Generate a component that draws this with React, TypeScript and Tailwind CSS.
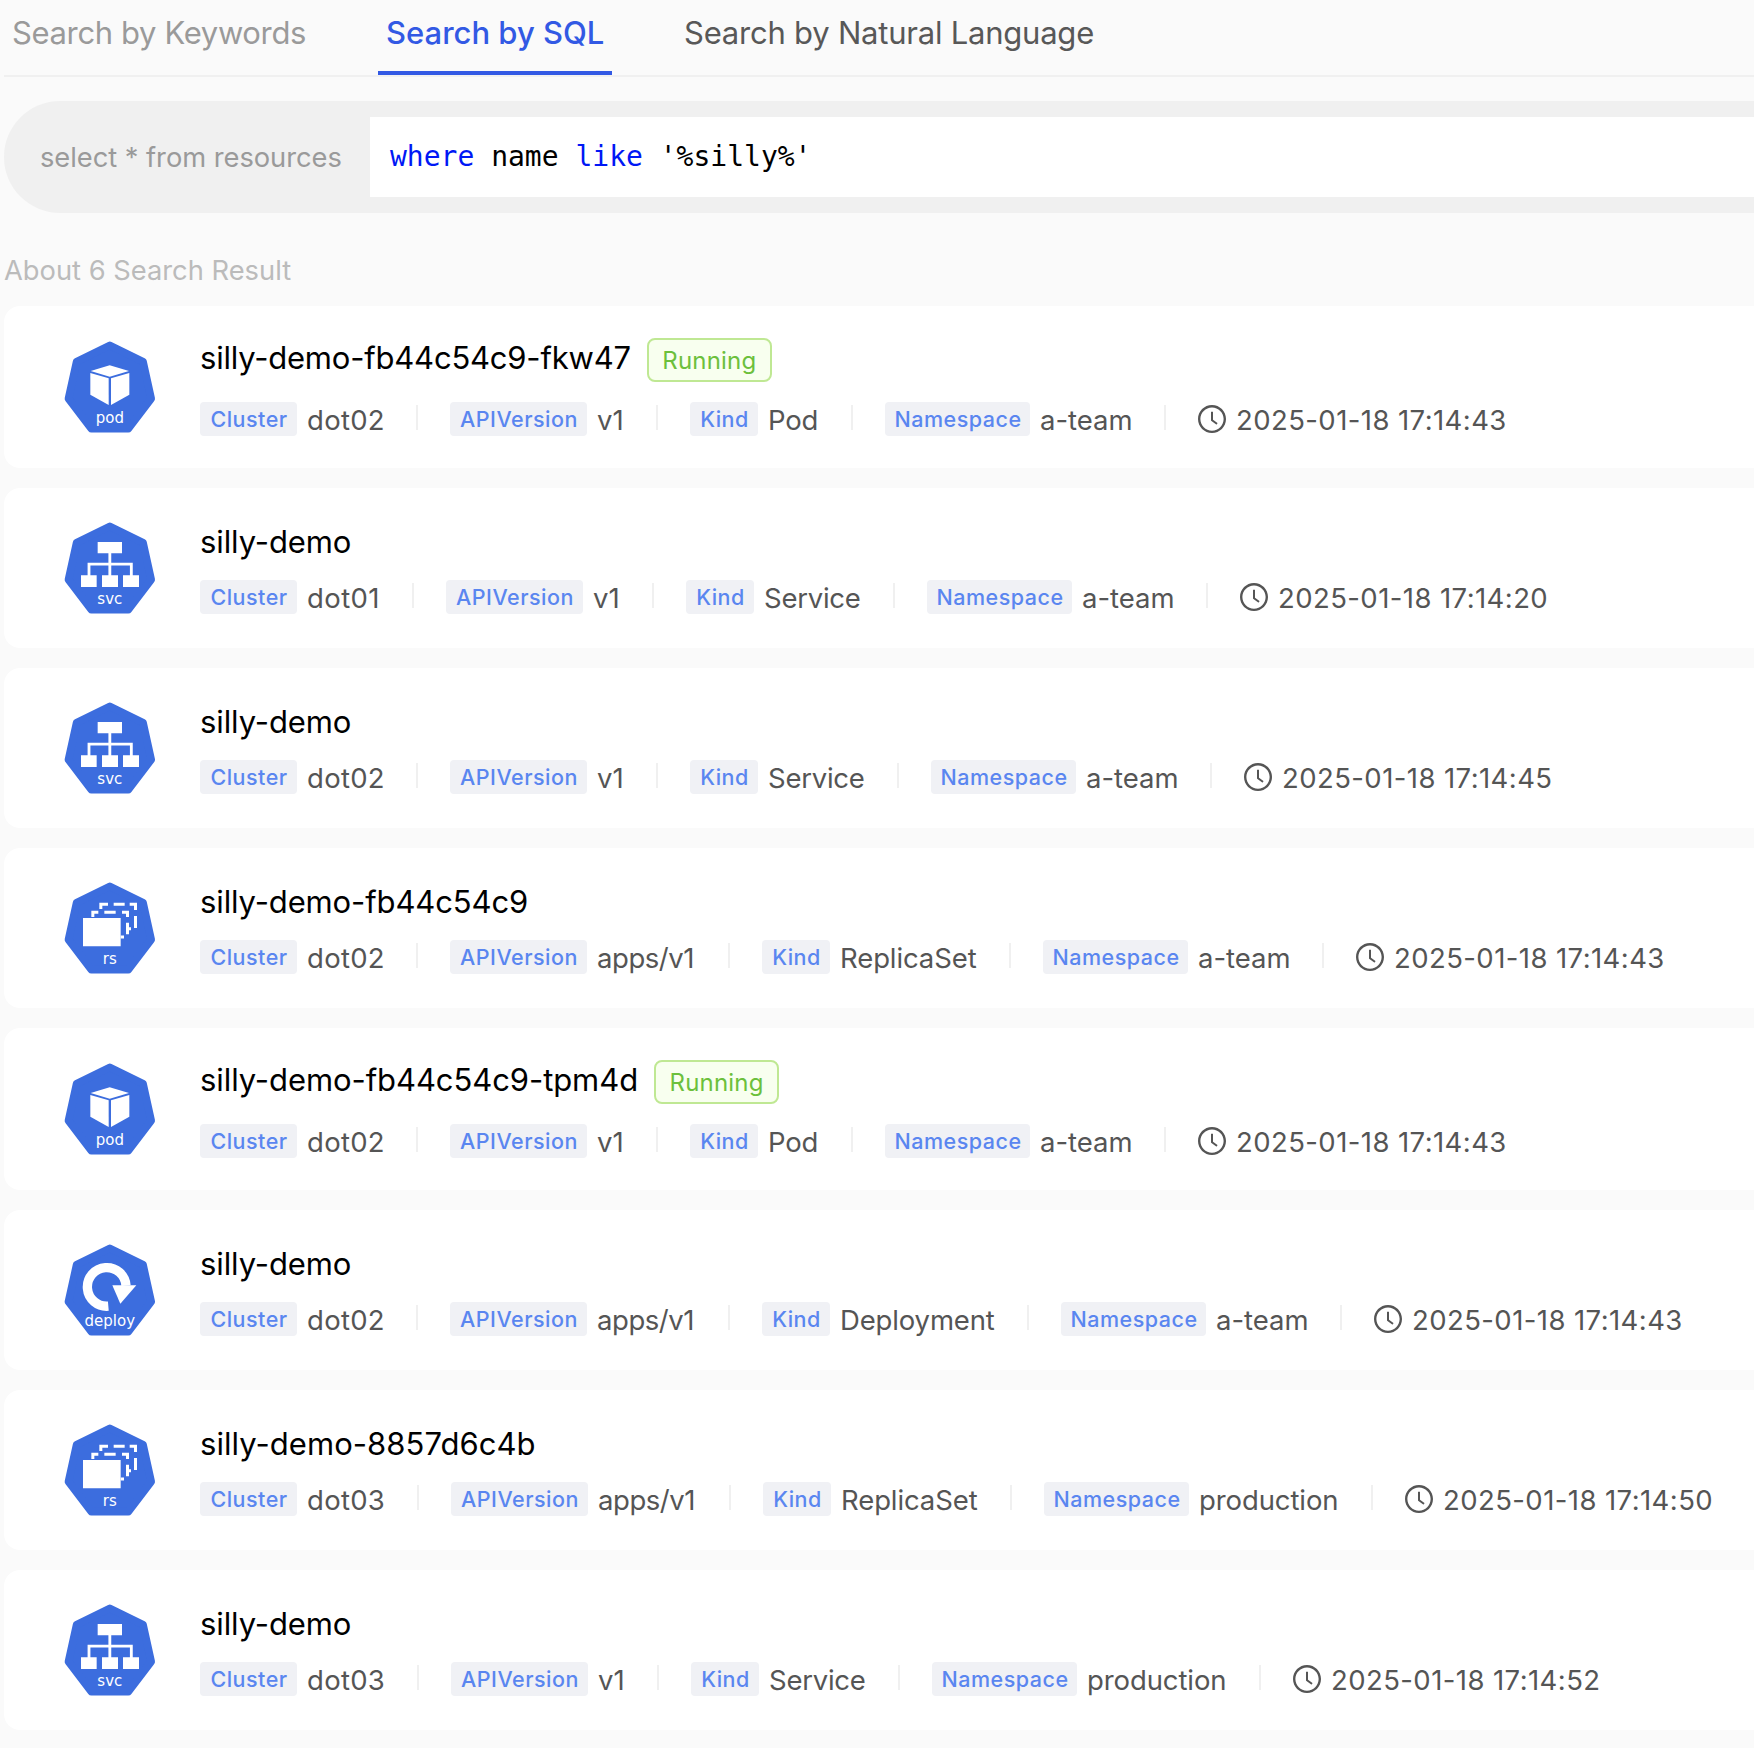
import type { ReactNode } from "react";

type IconKind = "pod" | "svc" | "rs" | "deploy";

const GLYPHS: Record<IconKind, ReactNode> = {
  pod: (
    <>
      <path d="M143 82 L201 99 L143 116 L86 99 Z" />
      <path d="M85 105 L140 121 V201 L85 170 Z" />
      <path d="M202 105 L147 121 V201 L202 170 Z" />
    </>
  ),
  svc: (
    <>
      <path d="M107 69h73v34h-73z M57 169h47v35H57z M120 169h48v35h-48z M183 169h48v35h-48z" />
      <path d="M143.500 100 V172 M81 172 V135.500 H208 V172" fill="none" stroke="#fff" strokeWidth="8.500" />
    </>
  ),
  rs: (
    <>
      <path d="M63 117h113v85H63z" />
      <path
        d="M92.500 114 V99.500 H109 M127 99.500 H161 M180 99.500 H196.500 V114 M196.500 131 V166 M200 149 H207 M176 174 H186 M116.500 90 V75.500 H138 M155 75.500 H188 M203 75.500 H220.500 V93 M220.500 111 V147"
        fill="none"
        stroke="#fff"
        strokeWidth="9"
      />
    </>
  ),
  deploy: (
    <>
      <path d="M139 195.500 A58 58 0 1 1 192 134" fill="none" stroke="#fff" strokeWidth="28" />
      <path d="M151 133 H223 L175 188 Z" />
    </>
  ),
};

function ResourceIcon({ kind }: { kind: IconKind }) {
  return (
    <svg className="ml-[58px] h-[98px] w-24 shrink-0" viewBox="0 0 288 294" fill="#fff">
      <path
        d="M143.500 22 L243 71 L267.500 182 L199 272 H88 L19.500 182 L44 71 Z"
        fill="#3c6dde"
        stroke="#3c6dde"
        strokeWidth="23"
        strokeLinejoin="round"
      />
      {GLYPHS[kind]}
      <text x="143.500" y="255.500" textAnchor="middle" fontFamily="DejaVu Sans" fontSize="45">
        {kind}
      </text>
    </svg>
  );
}

function ClockIcon() {
  return (
    <svg className="mt-[3px] size-7 shrink-0" viewBox="64 64 896 896" fill="currentColor">
      <path d="M512 64C264.600 64 64 264.600 64 512s200.600 448 448 448 448-200.600 448-448S759.400 64 512 64zm0 820c-205.400 0-372-166.600-372-372s166.600-372 372-372 372 166.600 372 372-166.600 372-372 372z" />
      <path d="M686.700 638.600L544.100 535.500V288c0-4.400-3.600-8-8-8H488c-4.400 0-8 3.600-8 8v275.400c0 2.600 1.200 5 3.300 6.500l165.400 120.600c3.600 2.600 8.600 1.800 11.200-1.700l28.600-39c2.600-3.700 1.800-8.700-1.800-11.200z" />
    </svg>
  );
}

const LABEL_WIDTH = {
  Cluster: "w-[97px]",
  APIVersion: "w-[137px]",
  Kind: "w-[68px]",
  Namespace: "w-[145px]",
};

const VALUE_STYLE: Record<string, string> = {
  dot01: "w-[73px] tracking-[0.4px]",
  dot02: "w-[77px] tracking-[0.3px]",
  dot03: "w-[78px] tracking-[0.3px]",
  v1: "w-[27px] tracking-normal",
  "apps/v1": "w-[99px] tracking-[-0.45px]",
  Pod: "w-[51px] tracking-[-0.2px]",
  Service: "w-[97px] tracking-[-0.25px]",
  ReplicaSet: "w-[137px] tracking-[-0.1px]",
  Deployment: "w-[155px] tracking-[-0.15px]",
  "a-team": "w-[92px] tracking-normal",
  production: "w-[140px] tracking-[-0.1px]",
};

function Field({ label, value }: { label: keyof typeof LABEL_WIDTH; value: string }) {
  return (
    <>
      <span
        className={`${LABEL_WIDTH[label]} flex h-[34px] shrink-0 items-center justify-center rounded bg-[#f0f1f5] pl-px text-[21.5px] font-medium tracking-[0.5px] text-[#5a86f0]`}
      >
        {label}
      </span>
      <span className={`${VALUE_STYLE[value]} ml-2.5 shrink-0 pt-px text-[27.5px] leading-[34px] whitespace-nowrap`}>
        {value}
      </span>
      <span className="mx-8 mt-[3px] h-[25px] w-0.5 shrink-0 bg-[#f0f0f0]" />
    </>
  );
}

interface Resource {
  icon: IconKind;
  name: string;
  nameTracking: string;
  running?: boolean;
  cluster: string;
  api: string;
  kind: string;
  namespace: string;
  time: string;
}

const RESOURCES: Resource[] = [
  { icon: "pod", name: "silly-demo-fb44c54c9-fkw47", nameTracking: "tracking-[-0.21px]", running: true, cluster: "dot02", api: "v1", kind: "Pod", namespace: "a-team", time: "2025-01-18 17:14:43" },
  { icon: "svc", name: "silly-demo", nameTracking: "tracking-[-0.1px]", cluster: "dot01", api: "v1", kind: "Service", namespace: "a-team", time: "2025-01-18 17:14:20" },
  { icon: "svc", name: "silly-demo", nameTracking: "tracking-[-0.1px]", cluster: "dot02", api: "v1", kind: "Service", namespace: "a-team", time: "2025-01-18 17:14:45" },
  { icon: "rs", name: "silly-demo-fb44c54c9", nameTracking: "tracking-[-0.12px]", cluster: "dot02", api: "apps/v1", kind: "ReplicaSet", namespace: "a-team", time: "2025-01-18 17:14:43" },
  { icon: "pod", name: "silly-demo-fb44c54c9-tpm4d", nameTracking: "tracking-[-0.08px]", running: true, cluster: "dot02", api: "v1", kind: "Pod", namespace: "a-team", time: "2025-01-18 17:14:43" },
  { icon: "deploy", name: "silly-demo", nameTracking: "tracking-[-0.1px]", cluster: "dot02", api: "apps/v1", kind: "Deployment", namespace: "a-team", time: "2025-01-18 17:14:43" },
  { icon: "rs", name: "silly-demo-8857d6c4b", nameTracking: "tracking-[0.05px]", cluster: "dot03", api: "apps/v1", kind: "ReplicaSet", namespace: "production", time: "2025-01-18 17:14:50" },
  { icon: "svc", name: "silly-demo", nameTracking: "tracking-[-0.1px]", cluster: "dot03", api: "v1", kind: "Service", namespace: "production", time: "2025-01-18 17:14:52" },
];

function ResourceCard({ item }: { item: Resource }) {
  return (
    <div className={`${item.running ? "h-[162px]" : "h-40"} flex items-center rounded-l-2xl bg-white`}>
      <ResourceIcon kind={item.icon} />
      <div className="ml-[42px] flex flex-col self-start pt-8">
        <div className={`${item.running ? "mb-5" : "mb-4"} flex h-11 items-center`}>
          <span
            className={`${item.running ? "mb-[5px]" : "mb-px"} ${item.nameTracking} text-[31px] leading-10 whitespace-nowrap text-black`}
          >
            {item.name}
          </span>
          {item.running && (
            <span className="ml-4 flex h-11 w-[125px] items-center justify-center rounded-lg border-2 border-[#bfe893] bg-[#f8ffef] pt-px text-[24px] tracking-[0.2px] text-[#6cc03c]">
              Running
            </span>
          )}
        </div>
        <div className="flex h-[34px] items-start text-[#555]">
          <Field label="Cluster" value={item.cluster} />
          <Field label="APIVersion" value={item.api} />
          <Field label="Kind" value={item.kind} />
          <Field label="Namespace" value={item.namespace} />
          <ClockIcon />
          <span className="ml-2.5 pt-px text-[27.5px] leading-[34px] tracking-[0.42px] whitespace-nowrap">{item.time}</span>
        </div>
      </div>
    </div>
  );
}

export default function App() {
  return (
    <div className="h-[1748px] w-full overflow-hidden bg-[#fafafa] pl-1 font-['Inter',sans-serif]">
      <div className="flex h-[77px] gap-16 border-b-2 border-[#f0f0f0] text-[31px] leading-[65px] whitespace-nowrap">
        <div className="w-[310px] pl-2 tracking-[-0.36px] text-[#9a9a9a]">Search by Keywords</div>
        <div className="w-[234px] border-b-4 border-[#3259e4] pl-2 font-medium text-[#3259e4]">Search by SQL</div>
        <div className="pl-2 tracking-[-0.22px] text-[#585858]">Search by Natural Language</div>
      </div>

      <div className="mt-6 flex h-28 items-center rounded-l-full bg-[#f0f0f0]">
        <div className="w-[366px] shrink-0 pt-0.5 pl-9 text-[27.3px] tracking-[-0.04px] whitespace-nowrap text-[#9a9a9a]">
          select * from resources
        </div>
        <div className="h-20 flex-1 bg-white pl-5 font-['DejaVu_Sans_Mono',monospace] text-[28px] leading-[80px] whitespace-pre text-black">
          <span className="text-[#0018f5]">where</span> name <span className="text-[#0018f5]">like</span> '%silly%'
        </div>
      </div>

      <div className="mt-[38px] mb-[15px] h-10 text-[27.3px] leading-10 text-[#bbb]">About 6 Search Result</div>

      <div className="flex flex-col gap-5">
        {RESOURCES.map((item, i) => (
          <ResourceCard key={i} item={item} />
        ))}
      </div>
    </div>
  );
}
